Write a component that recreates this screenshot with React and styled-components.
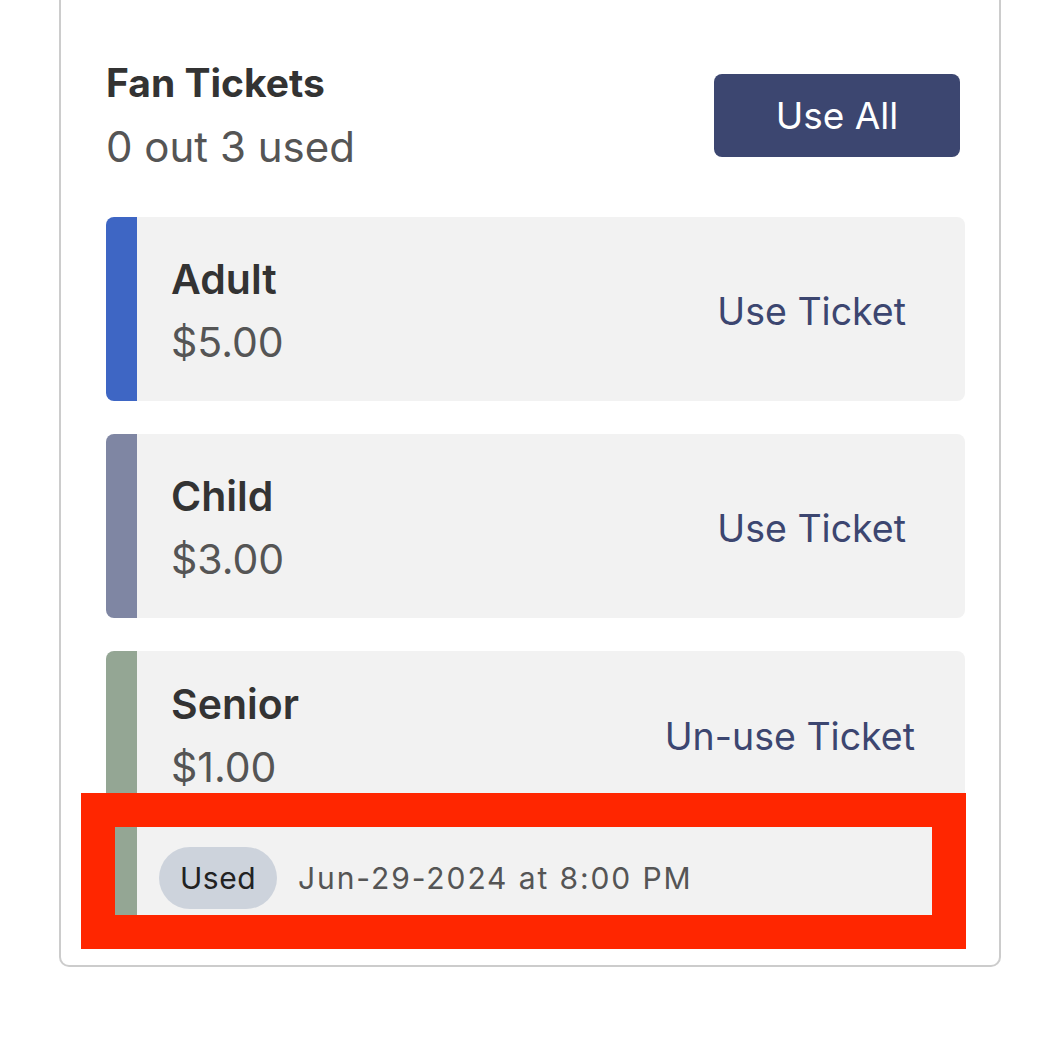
import React from 'react';
import styled, { createGlobalStyle } from 'styled-components';

const GlobalStyle = createGlobalStyle`
  *, *::before, *::after {
    box-sizing: border-box;
  }
  html, body {
    margin: 0;
    padding: 0;
    background: #ffffff;
  }
  body {
    font-family: Inter, "Noto Sans", "Liberation Sans", sans-serif;
  }
`;

const tickets = [
    { name: 'Adult', price: '$5.00', color: '#3e66c4', action: 'Use Ticket' },
    { name: 'Child', price: '$3.00', color: '#7f86a3', action: 'Use Ticket' },
    { name: 'Senior', price: '$1.00', color: '#94a694', action: 'Un-use Ticket', used: 'Jun-29-2024 at 8:00 PM' },
];

const App = () => {
    const usedCount = 0;

    return (
        <PageStyle>
            <GlobalStyle />
            <CardStyle>
                <HeaderStyle>
                    <div>
                        <TitleStyle>Fan Tickets</TitleStyle>
                        <SubtitleStyle>{usedCount} out {tickets.length} used</SubtitleStyle>
                    </div>
                    <UseAllButtonStyle>Use All</UseAllButtonStyle>
                </HeaderStyle>
                <ListStyle>
                    {tickets.map((ticket) => (
                        <TicketStyle key={ticket.name} stripe={ticket.color} used={!!ticket.used}>
                            <TicketRowStyle used={!!ticket.used}>
                                <div>
                                    <TicketNameStyle>{ticket.name}</TicketNameStyle>
                                    <TicketPriceStyle>{ticket.price}</TicketPriceStyle>
                                </div>
                                <ActionStyle>{ticket.action}</ActionStyle>
                            </TicketRowStyle>
                            {ticket.used && (
                                <UsedFooterStyle stripe={ticket.color}>
                                    <PillStyle>Used</PillStyle>
                                    <UsedDateStyle>{ticket.used}</UsedDateStyle>
                                </UsedFooterStyle>
                            )}
                        </TicketStyle>
                    ))}
                </ListStyle>
            </CardStyle>
        </PageStyle>
    );
};

const PageStyle = styled.div`
height: 1048px;
overflow: hidden;
padding-left: 59px;
`;

const CardStyle = styled.div`
width: 942px;
padding: 60px 34px 30px 45px;
border: 2px solid #cccccc;
border-top: none;
border-radius: 0 0 10px 10px;
`;

const HeaderStyle = styled.div`
display: flex;
justify-content: space-between;
align-items: flex-start;
margin-bottom: 45px;
`;

const TitleStyle = styled.h2`
margin: 0;
font-size: 39px;
line-height: 46px;
font-weight: 700;
color: #333333;
`;

const SubtitleStyle = styled.p`
margin: 16px 0 0;
font-size: 42px;
line-height: 50px;
color: #555555;
`;

const UseAllButtonStyle = styled.button`
width: 246px;
height: 83px;
margin-top: 14px;
margin-right: 5px;
border: none;
border-radius: 8px;
background-color: #3c4670;
color: #ffffff;
font-family: inherit;
font-size: 37px;
`;

const ListStyle = styled.div`
display: flex;
flex-direction: column;
gap: 33px;
`;

const TicketStyle = styled.div`
border-radius: 8px;
border-left: 31px solid ${(props) => props.stripe};
background-color: #f2f2f2;
padding-bottom: ${(props) => (props.used ? '20px' : '0')};
`;

const TicketRowStyle = styled.div`
height: ${(props) => (props.used ? '166px' : '184px')};
display: flex;
justify-content: space-between;
align-items: center;
padding: 4px ${(props) => (props.used ? '50px' : '59px')} 0 34px;
`;

const TicketNameStyle = styled.div`
font-size: 41px;
line-height: 63px;
font-weight: 600;
color: #333333;
`;

const TicketPriceStyle = styled.div`
font-size: 41px;
line-height: 63px;
color: #555555;
`;

const ActionStyle = styled.button`
border: none;
background: none;
padding: 0;
font-family: inherit;
font-size: 37.5px;
color: #3c4670;
`;

const UsedFooterStyle = styled.div`
display: flex;
align-items: center;
gap: 21px;
height: 88px;
margin: 10px 33px 0 -22px;
padding: 14px 0 0 22px;
border-left: 22px solid ${(props) => props.stripe};
background-color: #f2f2f2;
outline: 34px solid #ff2600;
`;

const PillStyle = styled.span`
display: inline-flex;
align-items: center;
justify-content: center;
width: 118px;
height: 62px;
border-radius: 31px;
background-color: #cdd3dc;
font-size: 30px;
letter-spacing: 0.5px;
color: #222222;
`;

const UsedDateStyle = styled.span`
font-size: 30px;
color: #555555;
letter-spacing: 1.9px;
`;

export default App;
